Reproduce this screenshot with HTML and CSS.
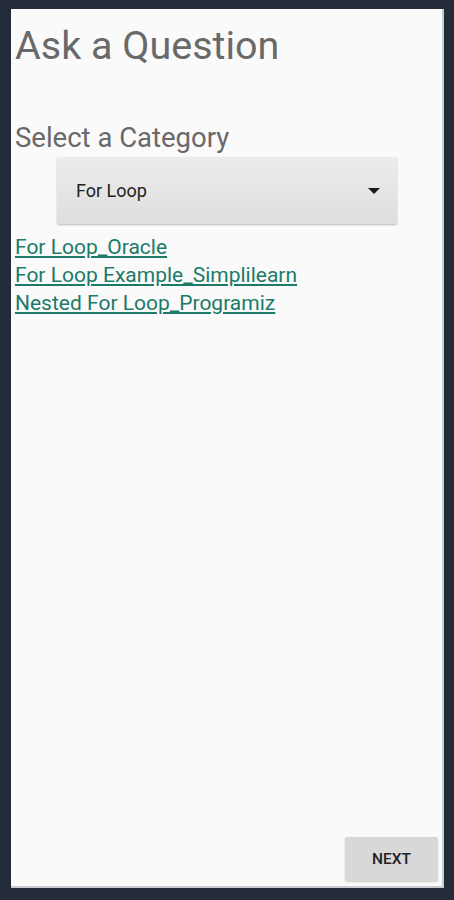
FILE: index.html
```html
<!DOCTYPE html>
<html>
<head>
<meta charset="utf-8">
<link rel="stylesheet" href="styles.css">
</head>
<body>
<div class="screen">
  <div class="panel">
    <h1 class="title">Ask a Question</h1>
    <div class="label">Select a Category</div>
    <div class="spinner">
      <span class="spinner-text">For Loop</span>
      <svg class="arrow" width="12" height="6" viewBox="0 0 12 6"><path d="M0 0H12L6 6Z" fill="#1a1a1a"/></svg>
    </div>
    <div class="links">
      <a class="link" href="#">For Loop_Oracle</a>
      <a class="link" href="#">For Loop Example_Simplilearn</a>
      <a class="link" href="#">Nested For Loop_Programiz</a>
    </div>
    <div class="spacer"></div>
    <div class="footer">
      <button class="next">NEXT</button>
    </div>
  </div>
</div>
</body>
</html>
```
FILE: styles.css
```css
html, body {
  margin: 0;
  padding: 0;
  background: #232a38;
}
.screen {
  width: 454px;
  height: 900px;
  box-sizing: border-box;
  padding: 9px 10px 12px 11px;
  display: flex;
}
.panel {
  flex: 1;
  background: #fafafa;
  border-right: 2px solid #c9cbd2;
  border-bottom: 2px solid #c9cbd2;
  display: flex;
  flex-direction: column;
  padding: 0 4px 0 4px;
  font-family: Roboto, "Liberation Sans", sans-serif;
}
.title {
  margin: 14px 0 0 0;
  font-weight: 400;
  font-size: 39.5px;
  line-height: 46px;
  color: #696969;
}
.label {
  margin-top: 53px;
  font-size: 27.5px;
  line-height: 32px;
  color: #696969;
}
.spinner {
  margin: 3px 0 0 42px;
  width: 340px;
  height: 67px;
  box-sizing: border-box;
  background: linear-gradient(#ececec, #dedede);
  border-radius: 2px;
  box-shadow: 0 1px 2px rgba(0,0,0,0.25);
  display: flex;
  align-items: center;
  padding: 0 17px 0 19px;
}
.spinner-text {
  flex: 1;
  font-size: 18px;
  color: #222222;
}
.arrow {
  display: block;
}
.links {
  margin-top: 9px;
  display: flex;
  flex-direction: column;
  align-items: flex-start;
}
.link {
  font-size: 21px;
  line-height: 28px;
  color: #1b7a68;
  text-decoration: underline;
  text-underline-offset: 2px;
}
.spacer {
  flex: 1;
}
.footer {
  display: flex;
  justify-content: flex-end;
  padding-bottom: 5px;
}
.next {
  width: 93px;
  height: 44px;
  margin-right: 0;
  background: #d8d8d8;
  border: none;
  border-radius: 2px;
  box-shadow: 0 1px 2px rgba(0,0,0,0.2);
  font-family: Roboto, "Liberation Sans", sans-serif;
  font-size: 15.5px;
  font-weight: 500;
  color: #222222;
}
```
